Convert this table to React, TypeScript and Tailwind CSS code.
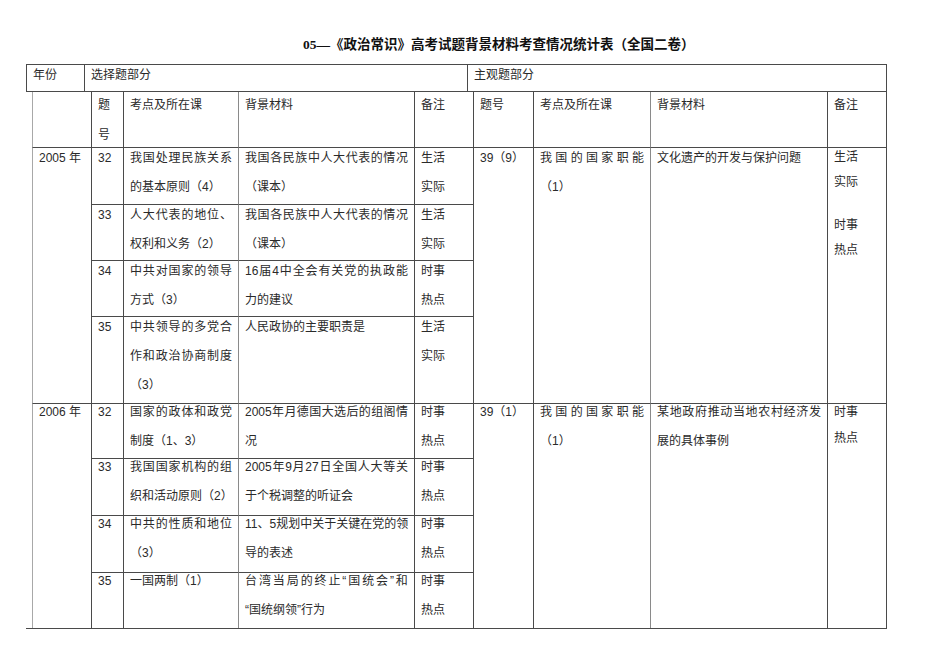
import React from 'react';

type Line = string | { t: string; j: true };

const J = (t: string): Line => ({ t, j: true });

type Row = { no: string; kd: Line[]; bg: Line[]; bz: Line[]; h: string };

const rows2005: Row[] = [
  { no: '32', kd: [J('我国处理民族关系'), '的基本原则（4）'], bg: [J('我国各民族中人大代表的情况'), '（课本）'], bz: ['生活', '实际'], h: 'h-[57px]' },
  { no: '33', kd: [J('人大代表的地位、'), '权利和义务（2）'], bg: [J('我国各民族中人大代表的情况'), '（课本）'], bz: ['生活', '实际'], h: 'h-[56px]' },
  { no: '34', kd: [J('中共对国家的领导'), '方式（3）'], bg: [J('16 届 4 中全会有关党的执政能'), '力的建议'], bz: ['时事', '热点'], h: 'h-[56px]' },
  { no: '35', kd: [J('中共领导的多党合'), J('作和政治协商制度'), '（3）'], bg: ['人民政协的主要职责是'], bz: ['生活', '实际'], h: 'h-[87px]' },
];

const rows2006: Row[] = [
  { no: '32', kd: [J('国家的政体和政党'), '制度（1、3）'], bg: [J('2005 年月德国大选后的组阁情'), '况'], bz: ['时事', '热点'], h: 'h-[55px]' },
  { no: '33', kd: [J('我国国家机构的组'), '织和活动原则（2）'], bg: [J('2005 年 9 月 27 日全国人大等关'), '于个税调整的听证会'], bz: ['时事', '热点'], h: 'h-[57px]' },
  { no: '34', kd: [J('中共的性质和地位'), '（3）'], bg: [J('11、5 规划中关于关键在党的领'), '导的表述'], bz: ['时事', '热点'], h: 'h-[57px]' },
  { no: '35', kd: ['一国两制（1）'], bg: [J('台湾当局的终止“国统会”和'), '“国统纲领”行为'], bz: ['时事', '热点'], h: 'h-[56px]' },
];

function Text({ lines, lead = 'leading-[29px]', off = 'mt-[-5px]' }: { lines: Line[]; lead?: string; off?: string }) {
  return (
    <div className={`${lead} ${off}`}>
      {lines.map((l, i) => {
        if (typeof l === 'string') return <div key={i} className="whitespace-pre">{l}</div>;
        const parts = l.t.replace(/ /g, '').match(/[0-9A-Za-z]+|./gu) || [];
        return (
          <div key={i} className="flex justify-between whitespace-nowrap">
            {parts.map((p, k) => <span key={k}>{p}</span>)}
          </div>
        );
      })}
    </div>
  );
}

const cell = 'border-l border-t border-[#4a4a4a] px-[6px]';
const first = 'border-l border-t border-[#4a4a4a] border-l-[#a8a8a8] px-[6px]';

function YearBlock({ year, rows, off, right }: { year: string; rows: Row[]; off: string; right: React.ReactNode }) {
  return (
    <div className="flex">
      <div className={`${first} w-[59px]`}>
        <Text lines={[year]} off={off} />
      </div>
      <div className="flex flex-col">
        {rows.map((r) => (
          <div key={r.no} className={`flex ${r.h}`}>
            <div className={`${cell} w-[32px]`}><Text lines={[r.no]} off={off} /></div>
            <div className={`${cell} w-[115px]`}><Text lines={r.kd} off={off} /></div>
            <div className={`${cell} w-[176px] border-l-[#8a8a8a]`}><Text lines={r.bg} off={off} /></div>
            <div className={`${cell} w-[59px]`}><Text lines={r.bz} off={off} /></div>
          </div>
        ))}
      </div>
      {right}
    </div>
  );
}

export default function App() {
  return (
    <div className="w-[950px] h-[672px] bg-white text-[12px] text-[#2a2a2a] font-['Liberation_Sans','Noto_Sans_CJK_SC',sans-serif]">
      <div className="h-[64px] pt-[36px] pl-[303px]">
        <div className="text-[13.5px] leading-[18px] font-bold text-[#111] whitespace-nowrap font-['Liberation_Serif','Noto_Sans_CJK_SC',serif]">
          05—《政治常识》高考试题背景材料考查情况统计表（全国二卷）
        </div>
      </div>

      {/* top header row */}
      <div className="ml-[26px] w-[861px] h-[28px] flex border-t border-b border-r border-[#4a4a4a]">
        <div className="w-[58px] border-l border-[#4a4a4a] px-[6px]"><Text lines={['年份']} lead="leading-[26px]" off="mt-[-3px]" /></div>
        <div className="w-[383px] border-l border-[#4a4a4a] px-[6px]"><Text lines={['选择题部分']} lead="leading-[26px]" off="mt-[-3px]" /></div>
        <div className="w-[419px] border-l border-[#4a4a4a] px-[6px]"><Text lines={['主观题部分']} lead="leading-[26px]" off="mt-[-3px]" /></div>
      </div>

      <div className="ml-[32px] w-[855px] border-r border-[#4a4a4a]">
        {/* column headings */}
        <div className="flex h-[55px]">
          <div className="w-[59px] border-l border-l-[#a8a8a8]" />
          <div className="w-[32px] border-l border-[#4a4a4a] px-[6px]"><Text lines={['题', '号']} lead="leading-[30px]" off="mt-[-2px]" /></div>
          <div className="w-[115px] border-l border-[#4a4a4a] px-[6px]"><Text lines={['考点及所在课']} lead="leading-[30px]" off="mt-[-2px]" /></div>
          <div className="w-[176px] border-l border-[#8a8a8a] px-[6px]"><Text lines={['背景材料']} lead="leading-[30px]" off="mt-[-2px]" /></div>
          <div className="w-[59px] border-l border-[#4a4a4a] px-[6px]"><Text lines={['备注']} lead="leading-[30px]" off="mt-[-2px]" /></div>
          <div className="w-[60px] border-l border-[#4a4a4a] px-[6px]"><Text lines={['题号']} lead="leading-[30px]" off="mt-[-2px]" /></div>
          <div className="w-[117px] border-l border-[#4a4a4a] px-[6px]"><Text lines={['考点及所在课']} lead="leading-[30px]" off="mt-[-2px]" /></div>
          <div className="w-[177px] border-l border-[#8a8a8a] px-[6px]"><Text lines={['背景材料']} lead="leading-[30px]" off="mt-[-2px]" /></div>
          <div className="w-[59px] border-l border-[#4a4a4a] px-[6px]"><Text lines={['备注']} lead="leading-[30px]" off="mt-[-2px]" /></div>
        </div>

        <YearBlock
          year="2005 年"
          rows={rows2005}
          off="mt-[-4px]"
          right={
            <>
              <div className={`${cell} w-[60px]`}><Text lines={['39（9）']} off="mt-[-4px]" /></div>
              <div className={`${cell} w-[117px]`}><Text lines={[J('我国的国家职能'), '（1）']} off="mt-[-4px]" /></div>
              <div className={`${cell} w-[177px] border-l-[#8a8a8a]`}><Text lines={['文化遗产的开发与保护问题']} off="mt-[-4px]" /></div>
              <div className={`${cell} w-[59px]`}>
                <Text lines={['生活', '实际']} lead="leading-[25px]" off="mt-[-3px]" />
                <div className="h-[18px]" />
                <Text lines={['时事', '热点']} lead="leading-[25px]" off="mt-0" />
              </div>
            </>
          }
        />

        <YearBlock
          year="2006 年"
          rows={rows2006}
          off="mt-[-6px]"
          right={
            <>
              <div className={`${cell} w-[60px]`}><Text lines={['39（1）']} off="mt-[-6px]" /></div>
              <div className={`${cell} w-[117px]`}><Text lines={[J('我国的国家职能'), '（1）']} off="mt-[-6px]" /></div>
              <div className={`${cell} w-[177px] border-l-[#8a8a8a]`}><Text lines={[J('某地政府推动当地农村经济发'), '展的具体事例']} off="mt-[-6px]" /></div>
              <div className={`${cell} w-[59px]`}><Text lines={['时事', '热点']} lead="leading-[26px]" off="mt-[-5px]" /></div>
            </>
          }
        />
      </div>
      <div className="ml-[26px] w-[861px] h-px bg-[#4a4a4a]" />
    </div>
  );
}
